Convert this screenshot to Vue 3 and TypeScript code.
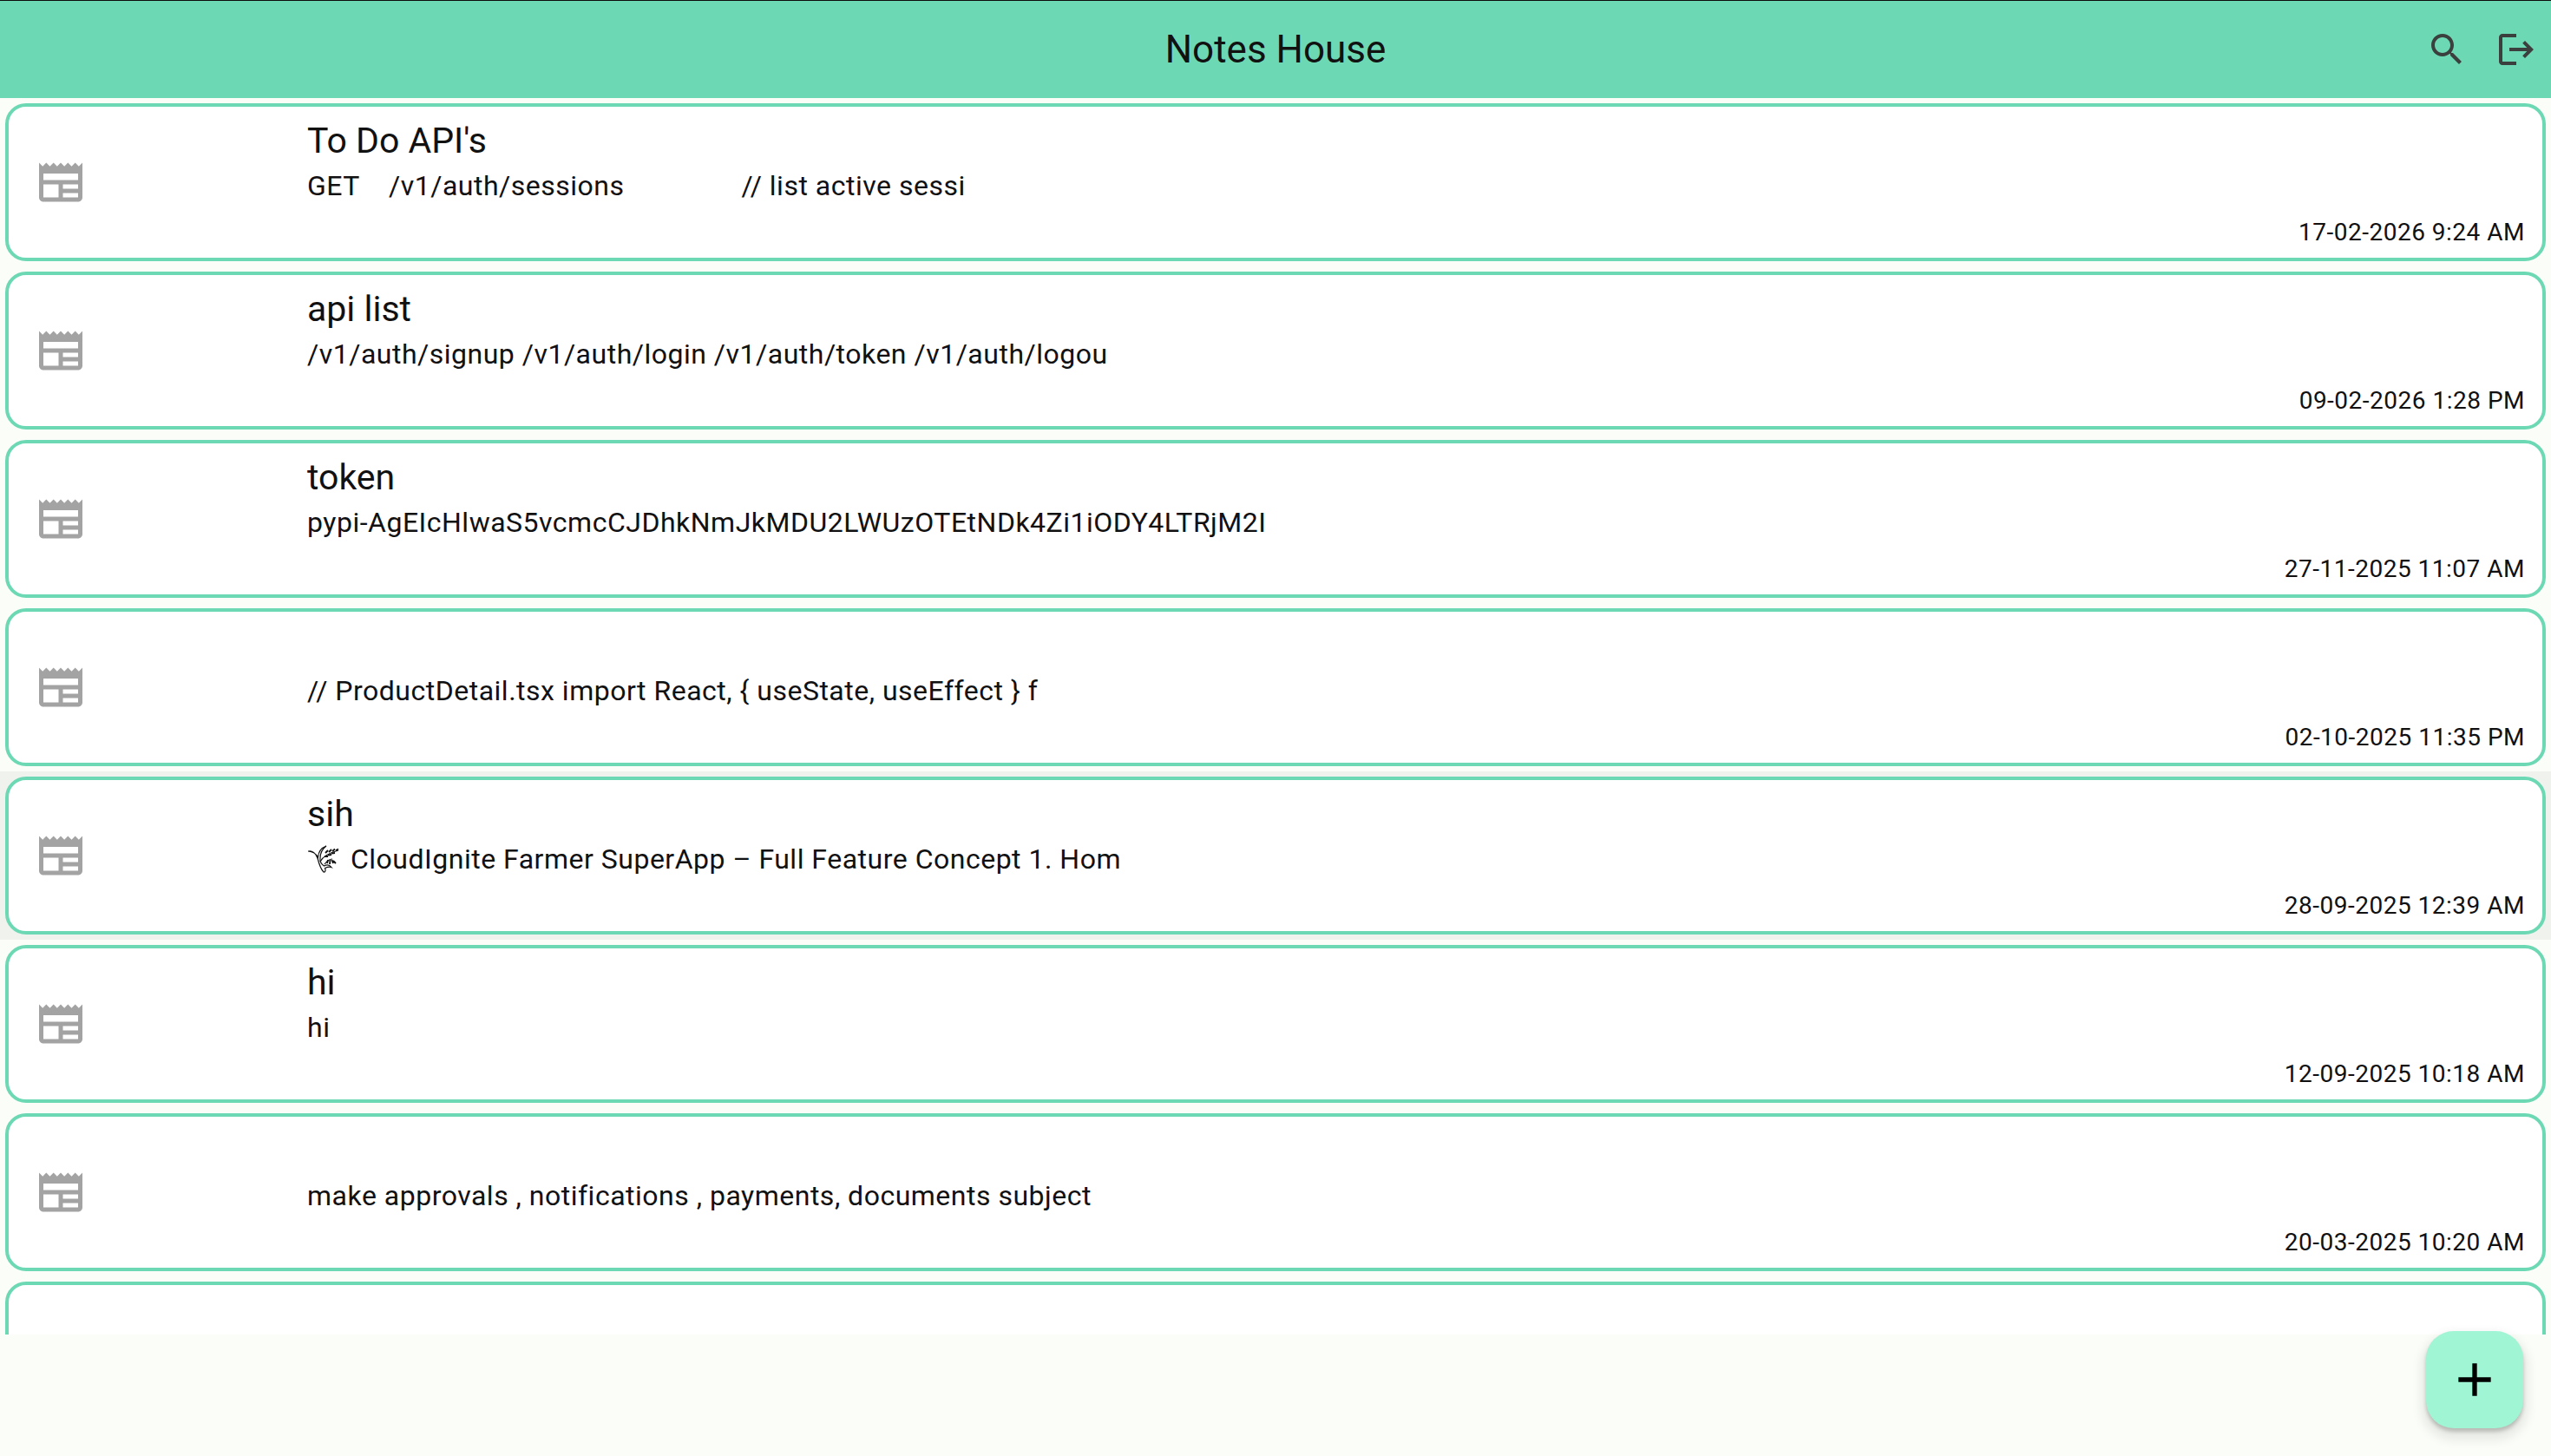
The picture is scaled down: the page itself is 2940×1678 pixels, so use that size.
<script setup lang="ts">
interface Note {
  title: string
  preview: string
  date: string
  wheat?: boolean
}

const notes: Note[] = [
  { title: "To Do API's", preview: 'GET    /v1/auth/sessions                // list active sessi', date: '17-02-2026 9:24 AM' },
  { title: 'api list', preview: '/v1/auth/signup /v1/auth/login /v1/auth/token /v1/auth/logou', date: '09-02-2026 1:28 PM' },
  { title: 'token', preview: 'pypi-AgEIcHlwaS5vcmcCJDhkNmJkMDU2LWUzOTEtNDk4Zi1iODY4LTRjM2I', date: '27-11-2025 11:07 AM' },
  { title: '', preview: '// ProductDetail.tsx import React, { useState, useEffect } f', date: '02-10-2025 11:35 PM' },
  { title: 'sih', preview: 'CloudIgnite Farmer SuperApp – Full Feature Concept 1. Hom', date: '28-09-2025 12:39 AM', wheat: true },
  { title: 'hi', preview: 'hi', date: '12-09-2025 10:18 AM' },
  { title: '', preview: 'make approvals , notifications , payments, documents subject', date: '20-03-2025 10:20 AM' },
  { title: '', preview: '', date: '' },
]
const pressedIndex = 4
</script>

<template>
  <div class="page">
    <header class="topbar">
      <h1 class="topbar-title">Notes House</h1>
      <div class="topbar-actions">
        <button class="icon-btn" aria-label="Search">
          <svg viewBox="0 0 24 24" width="48" height="48">
            <path d="M15.5 14h-.79l-.28-.27C15.41 12.59 16 11.11 16 9.5 16 5.91 13.09 3 9.5 3S3 5.91 3 9.5 5.91 16 9.5 16c1.61 0 3.09-.59 4.23-1.57l.27.28v.79l5 4.99L20.49 19l-4.99-5zm-6 0C7.01 14 5 11.99 5 9.5S7.01 5 9.5 5 14 7.01 14 9.5 11.99 14 9.5 14z" />
          </svg>
        </button>
        <button class="icon-btn" aria-label="Log out">
          <svg viewBox="0 0 24 24" width="48" height="48">
            <path d="M17 7l-1.41 1.41L18.17 11H8v2h10.17l-2.58 2.58L17 17l5-5zM4 5h8V3H4c-1.1 0-2 .9-2 2v14c0 1.1.9 2 2 2h8v-2H4V5z" />
          </svg>
        </button>
      </div>
    </header>

    <main class="note-list">
      <div v-for="(note, i) in notes" :key="i" class="note-row" :class="{ 'note-row--pressed': i === pressedIndex }">
        <article class="note-card">
          <svg class="note-icon" viewBox="0 0 24 24" width="60" height="60">
            <path d="M22 3l-1.67 1.67L18.67 3 17 4.67 15.33 3l-1.67 1.67L12 3l-1.67 1.67L8.67 3 7 4.67 5.33 3 3.67 4.67 2 3v16c0 1.1.9 2 2 2h16c1.1 0 2-.9 2-2V3zM11 19H4v-6h7v6zm9 0h-7v-2h7v2zm0-4h-7v-2h7v2zm0-4H4V8h16v3z" />
          </svg>
          <div class="note-body">
            <div class="note-title">{{ note.title }}</div>
            <div class="note-preview">
              <svg v-if="note.wheat" class="wheat" viewBox="0 0 36 32" width="36" height="32" fill="none" stroke="#111" stroke-width="1.2">
                <path d="M0.5 7c4-1 8.500 2 10.500 8 1.500 6 3 12 7 16 2 .5 2.500-2 1.500-4.500 3-1.500 5-2 7.500-1-2-2.500-5.500-3-8.500-1.500-3-2-5-5-4.500-9 0-6 3-11 7-14-5.500 2-9 7-9.500 13-2-4-6-6.500-11.500-7z" />
                <path d="M14 19c3-6 10-10 21-13M19 22c3-4 7-6 9-6" />
                <path d="M20 9l3-3M24 8l3-3M28 7l3-2.500M32 6l3-1.500M19 13h4M23 11.500l4-.5M27 9.500l4-.5M22 21l1-4M25 22l.5-5M29 21l-1.500-4M32 21l-3-3" stroke-width="1.800" />
              </svg>
              <span>{{ note.preview }}</span>
            </div>
            <div class="note-date">{{ note.date }}</div>
          </div>
        </article>
      </div>
    </main>

    <button class="fab" aria-label="Add note">
      <svg viewBox="0 0 24 24" width="64" height="64">
        <path d="M19 13h-6v6h-2v-6H5v-2h6V5h2v6h6v2z" />
      </svg>
    </button>
  </div>
</template>

<style scoped>
.page {
  position: relative;
  display: flex;
  flex-direction: column;
  height: 1678px;
  background: #fbfdf8;
  font-family: Roboto, "Liberation Sans", sans-serif;
  color: #111;
  overflow: hidden;
}

.topbar {
  position: relative;
  display: flex;
  align-items: center;
  justify-content: flex-end;
  flex: 0 0 113px;
  box-sizing: border-box;
  border-top: 1px solid #0c0c0c;
  background: #6dd9b4;
}

.topbar-title {
  position: absolute;
  left: 0;
  right: 0;
  margin: 0;
  text-align: center;
  font-size: 44px;
  font-weight: 400;
  color: #111;
}

.topbar-actions {
  display: flex;
}

.icon-btn {
  display: flex;
  align-items: center;
  justify-content: center;
  width: 80px;
  height: 80px;
  padding: 0;
  border: 0;
  background: none;
  fill: #3b3f3d;
}

.note-list {
  flex: 0 0 1425px;
  overflow: hidden;
}

.note-row {
  padding: 6px;
  height: 194px;
  box-sizing: border-box;
}

.note-row--pressed {
  background: #f0f2ee;
}

.note-card {
  display: flex;
  align-items: center;
  box-sizing: border-box;
  height: 182px;
  padding: 0 20px 0 30px;
  border: 4px solid #6dd9b4;
  border-radius: 24px;
  background: #fff;
}

.note-icon {
  flex: none;
  fill: #a3a3a3;
}

.note-body {
  flex: 1;
  align-self: flex-start;
  display: flex;
  flex-direction: column;
  margin-left: 254px;
  padding-top: 12px;
}

.note-title {
  height: 53px;
  line-height: 54px;
  font-size: 41px;
  color: #111;
}

.note-preview {
  display: flex;
  align-items: center;
  height: 52px;
  line-height: 52px;
  font-size: 32px;
  letter-spacing: 0.5px;
  white-space: pre;
}

.wheat {
  flex: none;
  margin: 0 13px 0 1px;
}

.note-date {
  align-self: flex-end;
  line-height: 55px;
  font-size: 28px;
  letter-spacing: 0.5px;
}

.fab {
  position: absolute;
  left: 2796px;
  top: 1534px;
  display: flex;
  align-items: center;
  justify-content: center;
  width: 112px;
  height: 112px;
  padding: 0;
  border: 0;
  border-radius: 32px;
  background: #9ff5d4;
  fill: #000;
  box-shadow: 0 4px 4px rgba(0, 0, 0, 0.2), 0 8px 12px 6px rgba(0, 0, 0, 0.08);
}
</style>
